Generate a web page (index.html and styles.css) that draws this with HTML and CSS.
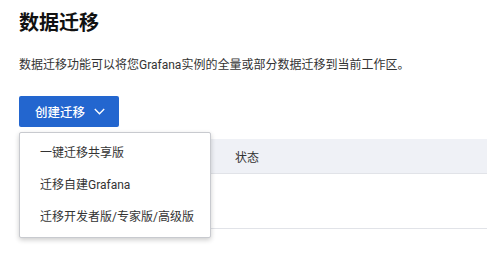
FILE: index.html
```html
<!DOCTYPE html>
<html lang="zh-CN">
<head>
  <meta charset="UTF-8" />
  <title>数据迁移</title>
  <link rel="stylesheet" href="styles.css">
</head>
<body>
  <div class="page">
    <h1 class="title">数据迁移</h1>
    <p class="desc">数据迁移功能可以将您Grafana实例的全量或部分数据迁移到当前工作区。</p>

    <div class="actions">
      <button class="create-btn">创建迁移
        <svg class="chevron" width="11" height="7" viewBox="0 0 11 7"><path d="M0.8 1 L5.5 5.8 L10.2 1" fill="none" stroke="#fff" stroke-width="1.3"/></svg>
      </button>
      <ul class="menu">
        <li>一键迁移共享版</li>
        <li>迁移自建Grafana</li>
        <li>迁移开发者版/专家版/高级版</li>
      </ul>
    </div>

    <table class="list">
      <thead>
        <tr><th class="col-name"></th><th>状态</th></tr>
      </thead>
      <tbody>
        <tr><td></td><td></td></tr>
      </tbody>
    </table>
  </div>
</body>
</html>
```

FILE: styles.css
```css
html, body {
  height: 100%;
}
body {
  margin: 0;
  font-family: Roboto, "Noto Sans CJK SC", sans-serif;
  color: #333;
  background: #fff;
}
.page {
  min-height: 100%;
  box-sizing: border-box;
  padding: 9px 0 30px 19px;
}
.title {
  margin: 0;
  font-size: 20px;
  line-height: 28px;
  font-weight: 600;
  color: #111;
}
.desc {
  margin: 18px 0 0;
  font-size: 12px;
  line-height: 20px;
  color: #333;
}
.actions {
  position: relative;
  margin-top: 21px;
}
.create-btn {
  display: flex;
  align-items: center;
  gap: 9px;
  height: 31px;
  width: 100px;
  padding: 0 0 0 16px;
  border: none;
  border-radius: 2px;
  background: #2366cf;
  color: #fff;
  font-family: inherit;
  font-size: 12.5px;
  font-weight: 500;
}
.menu {
  position: absolute;
  top: 36px;
  left: 0;
  z-index: 2;
  width: 190px;
  margin: 0;
  padding: 4px 0;
  list-style: none;
  background: #fff;
  border: 1px solid #c8cacf;
  border-radius: 2px;
  box-shadow: 0 2px 5px rgba(0, 0, 0, 0.2);
}
.menu li {
  height: 32px;
  line-height: 32px;
  padding-left: 20px;
  font-size: 12px;
  color: #333;
}
.list {
  width: 100%;
  margin-top: 12px;
  border-collapse: collapse;
  font-size: 12px;
}
.list th {
  height: 34px;
  padding: 0 16px;
  text-align: left;
  font-weight: normal;
  color: #333;
  background: #eff1f6;
  border-bottom: 1px solid #e1e3e8;
}
.list .col-name {
  width: 168px;
}
.list td {
  height: 52px;
  border-bottom: 1px solid #e1e3e8;
}
```
